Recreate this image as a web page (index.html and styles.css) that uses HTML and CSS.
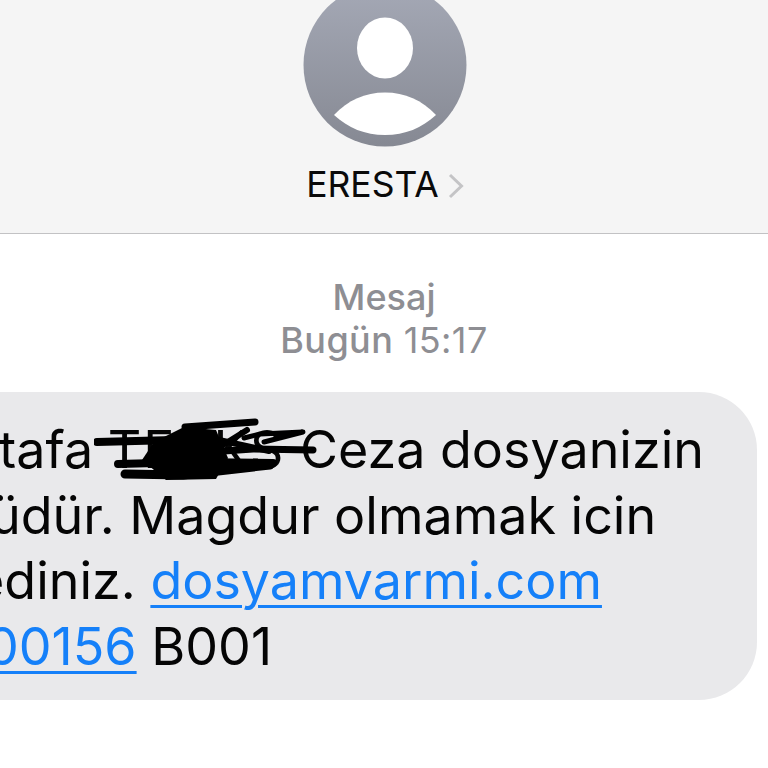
FILE: index.html
```html
<!DOCTYPE html>
<html lang="tr">
<head>
	<meta charset="utf-8" />
	<title>Mesaj</title>
	<link rel="stylesheet" href="styles.css">
</head>
<body>
    <div class="header">
        <svg class="avatar" width="164" height="148" viewBox="0 0 164 148">
            <defs>
                <linearGradient id="avatar_bg" x1="0" y1="0" x2="0" y2="1">
                    <stop offset="0" stop-color="#a5a9b6"/>
                    <stop offset="1" stop-color="#868993"/>
                </linearGradient>
            </defs>
            <circle cx="82" cy="65" r="81.5" fill="url(#avatar_bg)"/>
            <ellipse cx="82" cy="48" rx="28" ry="30.5" fill="#fff"/>
            <path d="M31 115 C45 100 62 92.500 82 92.500 C102 92.500 119 100 133 115 C119 128 102 135 82 135 C62 135 45 128 31 115 Z" fill="#fff"/>
        </svg>
        <div class="contact">
            <span class="contact-name">ERESTA</span>
            <svg class="chevron" width="16" height="26" viewBox="0 0 16 26">
                <path d="M2 2 L13.500 13 L2 24" fill="none" stroke="#c4c4c6" stroke-width="3"/>
            </svg>
        </div>
    </div>

    <div class="thread">
        <div class="stamp">
            <div class="stamp-kind">Mesaj</div>
            <div class="stamp-time"><b>Bugün</b> 15:17</div>
        </div>

        <div class="bubble">
            <div class="line line-a">tafa <span class="hidden-name">TEKKS</span> Ceza dosyanizin</div>
            <div class="line line-b">üdür. Magdur olmamak icin</div>
            <div class="line line-c">ediniz. <a href="#">dosyamvarmi.com</a></div>
            <div class="line line-d"><a href="#">00156</a> B001</div>

            <!-- scribbled out by hand over the surname -->
            <svg class="scribble" width="230" height="70" viewBox="0 0 230 70">
                <path d="M60 24 L90 9 L122 12 L134 40 L122 61 L72 62 L48 42 Z" fill="#000"/>
                <g fill="none" stroke="#000" stroke-linecap="round" stroke-linejoin="round">
                    <path stroke-width="8" d="M3 24 L80 22"/>
                    <path stroke-width="7" d="M91 9 L161 4"/>
                    <path stroke-width="6" d="M129 27 L153 12"/>
                    <path stroke-width="5" d="M150 20 L166 16 L209 14 L170 24"/>
                    <path stroke-width="7" d="M130 33 L159 31 L219 32"/>
                    <path stroke-width="6" d="M125 22 L175 33"/>
                    <path stroke-width="8" d="M24 46 L100 44 L179 45"/>
                    <path stroke-width="9" d="M31 56 L89 57 L176 47"/>
                </g>
            </svg>
        </div>
    </div>
</body>
</html>
```

FILE: styles.css
```css
html, body {
    margin:0;
    padding:0;
}

body {
    width:768px;
    height:768px;
    overflow:hidden;
    background:#fff;
    font-family:Inter, "Liberation Sans", sans-serif;
}

/*Contact header*/

.header {
    display:flex;
    flex-direction:column;
    align-items:center;
    box-sizing:border-box;
    height:234px;
    padding-left:2px;
    background:#f5f5f5;
    border-bottom:1px solid #c2c2c4;
}

.contact {
    display:flex;
    align-items:center;
    gap:9px;
    margin-top:15px;
}

.contact-name {
    font-size:35.500px;
    line-height:44px;
    color:#0a0a0a;
}

.chevron {
    margin-top:2px;
}

/*Thread*/

.stamp {
    padding-top:42px;
    text-align:center;
    font-size:36px;
    line-height:43px;
    color:#8e8e93;
}

.stamp-kind {
    font-weight:500;
}

.stamp-time {
    letter-spacing:.4px;
}

.stamp-time b {
    font-weight:500;
}

.bubble {
    position:relative;
    box-sizing:border-box;
    width:757px;
    height:308px;
    margin-top:30px;
    padding-top:25px;
    overflow:hidden;
    background:#e9e9eb;
    border-radius:0 58px 58px 0;
    font-size:52px;
    line-height:65.500px;
    color:#050505;
    white-space:nowrap;
}

.bubble a {
    color:#1580f9;
    text-decoration:underline;
    text-decoration-thickness:3px;
    text-underline-offset:6px;
}

.hidden-name {
    letter-spacing:2px;
}

.line-a {margin-left:-1px}
.line-b {margin-left:-10px}
.line-c {margin-left:-26px}
.line-d {margin-left:-14px}

.scribble {
    position:absolute;
    left:94px;
    top:26px;
}
```
